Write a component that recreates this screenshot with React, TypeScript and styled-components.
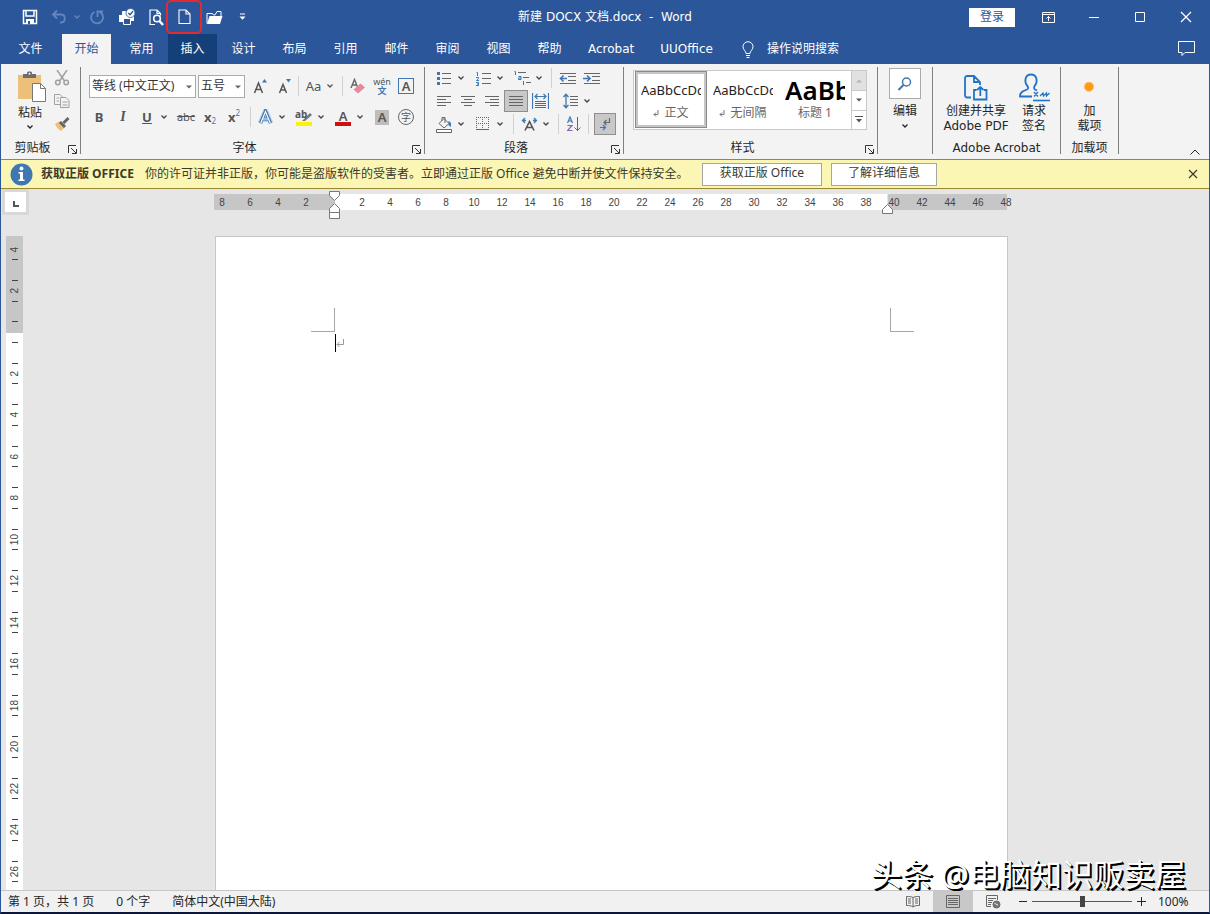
import React from "react";
import styled, { createGlobalStyle, css } from "styled-components";

const ui = `"Noto Sans", "Noto Sans CJK SC", sans-serif`;
const wide = `"DejaVu Sans", "Noto Sans CJK SC", sans-serif`;
const blue = "#2b579a";
const iconGrey = "#666666";
const iconBlue = "#3f78b0";

const Global = createGlobalStyle`
  * { box-sizing: border-box; }
  html, body, #root { height: 100%; }
  body { margin: 0; font-family: ${ui}; font-size: 12px; line-height: 16px; color: #262626; }
  button, select, input { font: inherit; color: inherit; margin: 0; }
  svg { display: block; flex: none; }
`;

const Window = styled.div`
  position: relative;
  display: flex;
  flex-direction: column;
  height: 100%;
  overflow: hidden;
  background: #e6e6e6;
  border: solid ${blue};
  border-width: 0 1px 2px;
  border-bottom-color: #0b1638;
`;

const PlainButton = styled.button`
  border: 0;
  padding: 0;
  background: transparent;
  display: flex;
  align-items: center;
  justify-content: center;
  flex: none;
  white-space: nowrap;
`;

/* ---------- title bar ---------- */

const TitleBar = styled.header`
  display: grid;
  grid-template-columns: 1fr auto 1fr;
  align-items: center;
  height: 34px;
  flex: none;
  background: ${blue};
  color: #fff;
`;
const QuickAccess = styled.div`
  display: flex;
  align-items: center;
  padding-left: 14px;
  height: 34px;
`;
const QuickButton = styled(PlainButton)<{ $w: number; $dim?: boolean }>`
  width: ${(p) => p.$w}px;
  height: 32px;
  color: ${(p) => (p.$dim ? "#6486bd" : "#fff")};
`;
const MarkedButton = styled(PlainButton)`
  width: 36px;
  height: 34px;
  margin: 0 -5px;
  border: 2px solid #e32a2e;
  border-radius: 5px;
  color: #fff;
`;
const Title = styled.h1`
  margin: 0;
  font-family: ${wide};
  font-size: 12px;
  font-weight: 400;
  white-space: pre;
`;
const WindowControls = styled.div`
  display: flex;
  align-items: center;
  justify-content: flex-end;
`;
const SignIn = styled(PlainButton)`
  width: 46px;
  height: 19px;
  margin-right: 10px;
  background: #fff;
  color: ${blue};
`;
const WindowButton = styled(PlainButton)`
  width: 46px;
  height: 32px;
`;

/* ---------- tab strip ---------- */

const TabStrip = styled.nav`
  display: flex;
  height: 30px;
  flex: none;
  background: ${blue};
  color: #fff;
  font-family: ${wide};
`;
const FileGroup = styled.div`
  display: flex;
  margin: 0 7px 0 5px;
`;
const TabGroup = styled.div`
  display: flex;
  gap: 2px;
  margin-left: 6px;
`;
const Tab = styled(PlainButton)<{ $active?: boolean; $hover?: boolean }>`
  min-width: 49px;
  padding: 0 12px;
  ${(p) => p.$active && css`background: #f3f3f3; color: ${blue};`}
  ${(p) => p.$hover && css`background: #143f78;`}
`;
const TellMe = styled(PlainButton)`
  gap: 13px;
  margin-left: 17px;
`;
const CommentButton = styled(PlainButton)`
  width: 46px;
  margin-left: auto;
  padding-bottom: 2px;
`;

/* ---------- ribbon ---------- */

const Ribbon = styled.section`
  display: flex;
  height: 95px;
  flex: none;
  background: #f3f3f3;
`;
const GroupBox = styled.div<{ $w: number }>`
  width: ${(p) => p.$w}px;
  height: 87px;
  margin-top: 3px;
  flex: none;
  display: flex;
  flex-direction: column;
  border-right: 1px solid #7f7f7f;
`;
const GroupBody = styled.div`
  flex: 1;
  min-height: 0;
`;
const GroupFoot = styled.div`
  display: flex;
  height: 14px;
  align-items: center;
`;
const GroupLabel = styled.span<{ $wide?: boolean }>`
  flex: 1;
  padding-top: 2px;
  text-align: center;
  white-space: nowrap;
  font-family: ${(p) => (p.$wide ? wide : ui)};
`;
const Launcher = styled(PlainButton)`
  width: 16px;
  height: 14px;
  padding-top: 4px;
`;
const ClipboardBody = styled.div`
  display: flex;
  padding-left: 8px;
`;
const PasteButton = styled(PlainButton)`
  width: 42px;
  height: 70px;
  flex-direction: column;
  justify-content: flex-start;
  padding-top: 4px;
  gap: 3px;
`;
const ToolColumn = styled.div`
  display: flex;
  flex-direction: column;
  gap: 1px;
`;
const FontRows = styled.div`
  display: flex;
  flex-direction: column;
  gap: 7px;
  padding: 7px 0 0 6px;
`;
const ParagraphRows = styled.div`
  display: flex;
  flex-direction: column;
  gap: 1px;
  padding-left: 7px;
`;
const ToolRow = styled.div<{ $h: number }>`
  display: flex;
  align-items: center;
  height: ${(p) => p.$h}px;
`;
const Tool = styled(PlainButton)<{ $on?: boolean; $w?: number }>`
  width: ${(p) => p.$w ?? 24}px;
  height: 22px;
  gap: 5px;
  color: #555;
  ${(p) => p.$on && css`background: #c8c8c8; outline: 1px solid #8e8e8e; outline-offset: -1px;`}
`;
const DropTool = styled(PlainButton)`
  width: 15px;
  height: 22px;
  justify-content: flex-start;
  padding-left: 1px;
  color: #444;
`;
const Separator = styled.span<{ $before?: number; $after?: number }>`
  width: 1px;
  height: 20px;
  flex: none;
  background: #d0d0d0;
  margin: 0 ${(p) => p.$after ?? 3}px 0 ${(p) => p.$before ?? 2}px;
`;
const Gap = styled.span<{ $w?: number }>`
  width: ${(p) => p.$w ?? 6}px;
  flex: none;
`;
const ComboWrap = styled.span<{ $w: number }>`
  position: relative;
  width: ${(p) => p.$w}px;
  height: 23px;
  margin: 0 0 0 2px;
  flex: none;
  color: #666;
  svg {
    position: absolute;
    right: 4px;
    top: 10px;
    pointer-events: none;
  }
`;
const Combo = styled.select`
  appearance: none;
  width: 100%;
  height: 23px;
  padding: 0 0 0 2px;
  border: 1px solid #ababab;
  border-radius: 0;
  background: #fff;
  color: #333;
`;
const Glyph = styled.span<{ $size?: number; $bold?: boolean; $italic?: boolean; $line?: string; $serif?: boolean }>`
  font-family: ${(p) => (p.$serif ? `"Liberation Serif", serif` : ui)};
  font-size: ${(p) => p.$size ?? 12}px;
  font-weight: ${(p) => (p.$bold ? 700 : 400)};
  font-style: ${(p) => (p.$italic ? "italic" : "normal")};
  text-decoration: ${(p) => p.$line ?? "none"};
  line-height: 16px;
`;
const Script = styled.small<{ $up?: boolean }>`
  font-size: 8px;
  font-weight: 400;
  line-height: 8px;
  color: ${iconBlue};
  align-self: ${(p) => (p.$up ? "flex-start" : "flex-end")};
`;
const ScriptTool = styled(Tool)`
  gap: 0;
  padding: 3px 0;
`;
const Pinyin = styled.span`
  display: flex;
  flex-direction: column;
  align-items: center;
  font-size: 9px;
  line-height: 9px;
  b {
    font-size: 9px;
    line-height: 10px;
    color: ${iconBlue};
  }
`;
const FramedA = styled.span`
  width: 16px;
  height: 16px;
  border: 1px solid ${iconBlue};
  font-size: 13px;
  font-weight: 600;
  line-height: 14px;
  text-align: center;
`;
const ShadedA = styled.span`
  width: 14px;
  height: 15px;
  background: #bdbdbd;
  font-size: 13px;
  font-weight: 600;
  line-height: 15px;
  text-align: center;
`;
const CircledChar = styled.span`
  width: 16px;
  height: 16px;
  border: 1px solid #666;
  border-radius: 50%;
  font-size: 10px;
  line-height: 14px;
  text-align: center;
`;
const ColourBarA = styled.span`
  width: 16px;
  height: 17px;
  border-bottom: 4px solid #d01010;
  font-size: 13px;
  font-weight: 600;
  line-height: 14px;
  text-align: center;
`;

const Gallery = styled.div`
  display: flex;
  height: 60px;
  margin: 3px 0 0 9px;
  width: 234px;
  border: 1px solid #c9c9c9;
  background: #fff;
`;
const StyleCard = styled(PlainButton)<{ $on?: boolean }>`
  flex-direction: column;
  justify-content: flex-start;
  gap: 1px;
  width: 72px;
  height: 57px;
  padding: 2px 3px 0;
  border: 3px solid ${(p) => (p.$on ? "#c6c6c6" : "transparent")};
  outline: ${(p) => (p.$on ? "1px solid #8a8a8a" : "none")};
  outline-offset: -1px;
  margin-left: ${(p) => (p.$on ? 1 : 0)}px;
`;
const Sample = styled.span<{ $head?: boolean }>`
  width: 60px;
  height: 28px;
  overflow: hidden;
  text-align: left;
  color: ${(p) => (p.$head ? "#000" : "#222")};
  font-size: ${(p) => (p.$head ? 26 : 13)}px;
  font-weight: ${(p) => (p.$head ? 600 : 400)};
  line-height: 28px;
`;
const StyleName = styled.span`
  display: flex;
  align-items: center;
  gap: 5px;
  color: #666;
`;
const GalleryScroll = styled.div`
  display: grid;
  grid-template-rows: repeat(3, 1fr);
  width: 15px;
  margin-left: auto;
  border-left: 1px solid #c9c9c9;
`;
const ScrollButton = styled(PlainButton)<{ $off?: boolean }>`
  background: ${(p) => (p.$off ? "#e1e1e1" : "#fff")};
  color: ${(p) => (p.$off ? "#b5b5b5" : "#555")};
  & + & { border-top: 1px solid #c9c9c9; }
`;
const BigButton = styled(PlainButton)`
  flex-direction: column;
  justify-content: flex-start;
`;
const EditButton = styled(BigButton)`
  width: 100%;
  padding-top: 1px;
  gap: 4px;
`;
const EditFrame = styled.span`
  width: 32px;
  height: 31px;
  display: grid;
  place-items: center;
  background: #fff;
  border: 1px solid #ababab;
`;
const LargeRow = styled.div`
  display: flex;
  justify-content: center;
  gap: 10px;
  padding-top: 4px;
`;
const TwoLines = styled.span`
  display: flex;
  flex-direction: column;
  align-items: center;
  font-family: ${wide};
  line-height: 15px;
`;
const LargeIcon = styled.span`
  height: 33px;
  display: grid;
  place-items: center;
`;
const Collapse = styled(PlainButton)`
  width: 28px;
  height: 14px;
  margin: auto 0 0 auto;
`;

/* ---------- licence message ---------- */

const MessageBar = styled.section`
  display: flex;
  align-items: center;
  height: 30px;
  flex: none;
  padding-left: 9px;
  background: #fcf6b4;
  border: solid #9b8832;
  border-width: 1px 0;
  color: #3a3a2c;
  white-space: nowrap;
`;
const MessageTitle = styled.strong`
  margin: 0 11px 0 8px;
`;
const MessageText = styled.span`
  width: 557px;
`;
const MessageButton = styled(PlainButton)<{ $w: number }>`
  width: ${(p) => p.$w}px;
  height: 23px;
  margin-right: 9px;
  padding-bottom: 2px;
  border: 1px solid #a5a5a5;
  background: #fff;
`;
const MessageClose = styled(PlainButton)`
  width: 32px;
  height: 24px;
  margin-left: auto;
`;

/* ---------- document area ---------- */

const Workspace = styled.main`
  flex: 1;
  min-height: 0;
  display: grid;
  grid-template-columns: 28px 1fr;
  grid-template-rows: 47px 1fr;
`;
const TabSelector = styled(PlainButton)`
  width: 27px;
  height: 26px;
  margin-left: 1px;
  border: 3px solid #d8d8d8;
  background: #fff;
  padding: 4px 0 0;
`;
const RulerTrack = styled.div`
  display: flex;
  justify-content: center;
  padding: 5px 12px 0 0;
  margin-left: -5px;
`;
const HRuler = styled.div`
  position: relative;
  display: flex;
  width: 793px;
  height: 16px;
  font-family: "Liberation Sans", sans-serif;
  font-size: 10px;
  color: #444;
`;
const HPart = styled.div<{ $kind: "left" | "text" | "right" }>`
  display: flex;
  flex: none;
  ${(p) => p.$kind === "left" && css`width: 121px; padding-right: 15px; justify-content: flex-end; background: #c6c6c6; overflow: hidden;`}
  ${(p) => p.$kind === "text" && css`width: 552px; padding-left: 13px; background: #fff;`}
  ${(p) => p.$kind === "right" && css`width: 119px; margin-left: 1px; background: #c6c6c6;`}
`;
const HNumber = styled.span`
  width: 28px;
  flex: none;
  text-align: center;
  line-height: 17px;
  ${HPart}:last-of-type > &:first-child { margin-left: -8px; }
`;
const IndentMarker = styled.span<{ $right?: boolean }>`
  position: absolute;
  ${(p) => (p.$right ? "right: 113px; top: 9px;" : "left: 114px; top: -3px;")}
`;
const VRuler = styled.div`
  display: flex;
  flex-direction: column;
  width: 17px;
  margin-left: 5px;
  min-height: 0;
  overflow: hidden;
  background: #fff;
  font-family: "Liberation Sans", sans-serif;
  font-size: 10px;
  color: #444;
`;
const VMargin = styled.div`
  display: flex;
  flex-direction: column;
  justify-content: flex-end;
  flex: none;
  height: 97px;
  padding-bottom: 1px;
  background: #c6c6c6;
  overflow: hidden;
`;
const VCell = styled.div<{ $short?: boolean }>`
  display: flex;
  flex-direction: column;
  align-items: center;
  justify-content: space-between;
  flex: none;
  height: 42px;
  padding: 10px 0;
  &:nth-child(odd) { height: 41px; }
  ${(p) => p.$short && css`&& { height: 20px; padding: 9px 0; }`}
`;
const Tick = styled.i<{ $hidden?: boolean }>`
  width: 6px;
  height: 1px;
  background: ${(p) => (p.$hidden ? "transparent" : "#444")};
`;
const VNumber = styled.span`
  writing-mode: vertical-rl;
  transform: rotate(180deg);
  line-height: 12px;
`;
const PageTrack = styled.div`
  display: flex;
  justify-content: center;
  padding-right: 10px;
  margin-left: -5px;
  min-height: 0;
`;
const Page = styled.article`
  width: 793px;
  padding: 71px 93px 0 95px;
  background: #fff;
  border: 1px solid #c6c6c6;
  border-bottom: 0;
`;
const Corners = styled.div`
  display: flex;
  justify-content: space-between;
`;
const Corner = styled.i<{ $right?: boolean }>`
  width: 24px;
  height: 24px;
  border: solid #a6a6a6;
  border-width: ${(p) => (p.$right ? "0 0 1px 1px" : "0 1px 1px 0")};
`;
const TextLine = styled.p`
  display: flex;
  align-items: center;
  margin: 2px 0 0 24px;
`;
const Caret = styled.i`
  width: 1px;
  height: 18px;
  background: #000;
`;
const Watermark = styled.div`
  position: absolute;
  right: 23px;
  bottom: 20px;
  font-size: 31px;
  line-height: 36px;
  color: #fff;
  text-shadow: 1px 1px 0 #000, 2px 2px 0 #000;
  white-space: nowrap;
`;

/* ---------- status bar ---------- */

const StatusBar = styled.footer`
  display: flex;
  align-items: center;
  height: 22px;
  flex: none;
  padding-left: 7px;
  background: #f1f1f1;
  border-top: 1px solid #c6c6c6;
`;
const StatusText = styled.span`
  margin-right: 22px;
  white-space: nowrap;
`;
const ViewTools = styled.div`
  display: flex;
  align-items: center;
  margin-left: auto;
`;
const ViewButton = styled(PlainButton)<{ $on?: boolean }>`
  width: 40px;
  height: 21px;
  color: #666;
  background: ${(p) => (p.$on ? "#c8c8c8" : "transparent")};
`;
const ZoomStep = styled(PlainButton)`
  width: 19px;
  height: 21px;
`;
const Zoom = styled.input`
  appearance: none;
  width: 100px;
  height: 16px;
  background: linear-gradient(#555, #555) center / 100% 1px no-repeat;
  &::-webkit-slider-thumb {
    appearance: none;
    width: 5px;
    height: 11px;
    background: #444;
  }
`;
const ZoomValue = styled.span`
  width: 58px;
  padding-left: 7px;
`;

/* ---------- icons ---------- */

type Box = { w: number; h?: number; children: React.ReactNode; sw?: number; c?: string };
const Ic = ({ w, h, children, sw = 1, c = "currentColor" }: Box) => (
  <svg width={w} height={h ?? w} viewBox={`0 0 ${w} ${h ?? w}`} fill="none" stroke={c} strokeWidth={sw} aria-hidden="true">
    {children}
  </svg>
);
const Chevron = () => (
  <Ic w={8} h={6} sw={1.3}><path d="M1.500 1.500 4 4l2.500-2.500" /></Ic>
);
const Triangle = ({ up }: { up?: boolean }) => (
  <Ic w={6} h={4}><path d={up ? "M0 3.500h6L3 .5z" : "M0 .5h6L3 3.500z"} fill="currentColor" stroke="none" /></Ic>
);
const Lines = ({ rows }: { rows: [number, number][] }) => (
  <Ic w={16} h={13} c={iconGrey}>
    {rows.map(([a, b], i) => <path key={i} d={`M${a} ${i * 3 + 1.5}H${b}`} />)}
  </Ic>
);
const DialogArrow = () => (
  <Ic w={9} h={9} c="#333"><path d="M.5 8V.5H8M3 3l5 5M8.500 4v4.500H4" /></Ic>
);
const Cross = ({ s }: { s: number }) => (
  <Ic w={s} sw={1.2}><path d={`M1 1 ${s - 1} ${s - 1}M${s - 1} 1 1 ${s - 1}`} /></Ic>
);
const Return = () => (
  <Ic w={6} h={7} c="#777"><path d="M5 0v4.500H1M3 2.500 1 4.500l2 2" /></Ic>
);

function Group({ w, label, launcher, latin, children }: { w: number; label?: string; launcher?: boolean; latin?: boolean; children: React.ReactNode }) {
  return (
    <GroupBox $w={w}>
      <GroupBody>{children}</GroupBody>
      <GroupFoot>
        <GroupLabel $wide={latin}>{label}</GroupLabel>
        {launcher && <Launcher aria-label={`${label}设置`}><DialogArrow /></Launcher>}
      </GroupFoot>
    </GroupBox>
  );
}
const Drop = ({ name }: { name: string }) => (
  <DropTool aria-label={`${name}选项`}><Chevron /></DropTool>
);

const tabs = ["常用", "插入", "设计", "布局", "引用", "邮件", "审阅", "视图", "帮助", "Acrobat", "UUOffice"];
const evens = (from: number, to: number) => Array.from({ length: (to - from) / 2 + 1 }, (_, i) => from + i * 2);

function Header() {
  return (
    <>
      <TitleBar>
        <QuickAccess>
          <QuickButton $w={30} aria-label="保存">
            <Ic w={16} sw={1.5}><path d="M1.500 1.500h13v13h-13z" /><path d="M4 2v5h8V2" /><path d="M4 10h8v5H4z" fill="#fff" stroke="none" /><path d="M6 12h2v3H6z" fill={blue} stroke="none" /></Ic>
          </QuickButton>
          <QuickButton $w={27} $dim aria-label="撤消">
            <Ic w={16} sw={1.8}><path d="M6 1.500 2 5.500l4 4M2.500 5.500h7.500c5 0 5 8 0 8H9" /></Ic>
          </QuickButton>
          <QuickButton $w={9} $dim aria-label="撤消列表"><Chevron /></QuickButton>
          <QuickButton $w={32} $dim aria-label="重复">
            <Ic w={16} sw={1.8}><path d="M5.500 3A6 6 0 1 0 11 3.200M8.500 8V2.500H14" /></Ic>
          </QuickButton>
          <QuickButton $w={28} aria-label="快速打印">
            <Ic w={18} h={18}>
              <path d="M1 7h4v-3h3v3h8v6h-3v-2H5v3H1z" fill="#fff" stroke="none" />
              <path d="M5.500 11v5.500h7V11M4.500 7V3.500H8" />
              <circle cx="12.500" cy="5" r="4.500" fill="#fff" stroke={blue} strokeWidth=".8" />
              <path d="m10.300 5 1.700 1.800 3-3.600" stroke={blue} strokeWidth="1.400" />
            </Ic>
          </QuickButton>
          <QuickButton $w={30} aria-label="打印预览">
            <Ic w={16} h={17} sw={1.2}><path d="M7 15.500H2V1h7l3.500 3.500v2M9 1v3.500h3.500" /><circle cx="9" cy="9.500" r="3.300" strokeWidth="1.600" /><path d="m11.500 12 3.500 4" strokeWidth="2.400" /></Ic>
          </QuickButton>
          <MarkedButton aria-label="新建">
            <Ic w={13} h={16} sw={1.1}><path d="M1 1h7l4 4v9.500H1zM8 1v4h4" /></Ic>
          </MarkedButton>
          <QuickButton $w={34} aria-label="打开">
            <Ic w={17} h={15}><path d="M1 13.500V3.500h5L8 5h1l2-3.500h4V6" /><path d="M3.500 6H16.500L14 14H1z" fill="#fff" stroke="none" /></Ic>
          </QuickButton>
          <QuickButton $w={22} aria-label="自定义快速访问工具栏">
            <Ic w={7} h={8}><path d="M1 1h5" /><path d="M.5 3.500h6L3.500 6.800z" fill="currentColor" stroke="none" /></Ic>
          </QuickButton>
        </QuickAccess>
        <Title>新建 DOCX 文档.docx  -  Word</Title>
        <WindowControls>
          <SignIn>登录</SignIn>
          <WindowButton aria-label="功能区显示选项"><Ic w={13} h={11}><path d="M.5.5h12v10H.5zM.5 2.500h12M6.500 9V4.500M4.500 6.500l2-2 2 2" /></Ic></WindowButton>
          <WindowButton aria-label="最小化"><Ic w={10} h={3}><path d="M0 1.500h10" /></Ic></WindowButton>
          <WindowButton aria-label="最大化"><Ic w={10}><path d="M.5.5h9v9h-9z" /></Ic></WindowButton>
          <WindowButton aria-label="关闭"><Cross s={12} /></WindowButton>
        </WindowControls>
      </TitleBar>
      <TabStrip>
        <FileGroup><Tab>文件</Tab></FileGroup>
        <Tab $active>开始</Tab>
        <TabGroup>
          {tabs.map((t) => <Tab key={t} $hover={t === "插入"}>{t}</Tab>)}
        </TabGroup>
        <TellMe>
          <Ic w={12} h={17}><path d="M4 12.500c0-2.500-3-3.500-3-6.800a5 5 0 0 1 10 0c0 3.300-3 4.300-3 6.800zM4 14.500h4M4.500 16.500h3" /></Ic>
          操作说明搜索
        </TellMe>
        <CommentButton aria-label="批注"><Ic w={17} h={15}><path d="M.5.5h16v11H7L4 14.500v-3H.5z" /></Ic></CommentButton>
      </TabStrip>
    </>
  );
}

function FontGroup() {
  return (
    <Group w={344} label="字体" launcher>
      <FontRows>
        <ToolRow $h={24}>
          <ComboWrap $w={107}>
            <Combo aria-label="字体"><option>等线 (中文正文)</option></Combo>
            <Triangle />
          </ComboWrap>
          <ComboWrap $w={47}>
            <Combo aria-label="字号"><option>五号</option></Combo>
            <Triangle />
          </ComboWrap>
          <Gap $w={3} />
          <Tool aria-label="增大字号"><Ic w={15} h={16} sw={1.5} c="#555"><path d="m1.500 15 4-10 4 10M3 11.500h5" /><path d="M9 4.500h5L11.500 1z" fill={iconBlue} stroke="none" /></Ic></Tool>
          <Tool aria-label="减小字号"><Ic w={15} h={16} sw={1.5} c="#555"><path d="m2.500 15 3.500-8.500L9.500 15M4 12h4" /><path d="M9 1h5l-2.500 3.500z" fill={iconBlue} stroke="none" /></Ic></Tool>
          <Separator />
          <Tool $w={36} aria-label="更改大小写"><Glyph $size={13}>Aa</Glyph><Chevron /></Tool>
          <Separator $before={4} />
          <Tool aria-label="清除格式"><Ic w={16} h={16} sw={1.4} c="#666"><path d="m1 10 3.500-8.500L7.500 9M2.500 7h4" /><path d="m3.500 11.500 7-6 4.500 4-7 6z" fill="#e8899a" stroke="none" /></Ic></Tool>
          <Tool aria-label="拼音指南"><Pinyin>wén<b>文</b></Pinyin></Tool>
          <Tool aria-label="字符边框"><FramedA>A</FramedA></Tool>
        </ToolRow>
        <ToolRow $h={24}>
          <Tool aria-label="加粗"><Glyph $bold $size={13}>B</Glyph></Tool>
          <Tool aria-label="倾斜"><Glyph $italic $serif $bold $size={14}>I</Glyph></Tool>
          <Tool aria-label="下划线"><Glyph $bold $line="underline" $size={13}>U</Glyph></Tool>
          <Drop name="下划线" />
          <Tool aria-label="删除线"><Glyph $size={11} $line="line-through">abc</Glyph></Tool>
          <ScriptTool aria-label="下标"><Glyph $bold $size={13}>x</Glyph><Script>2</Script></ScriptTool>
          <ScriptTool aria-label="上标"><Glyph $bold $size={13}>x</Glyph><Script $up>2</Script></ScriptTool>
          <Separator $before={4} $after={2} />
          <Tool aria-label="文本效果"><Ic w={15} h={16}><path d="M2 14.500 7.500 2 13 14.500M4.500 10.500h6" stroke="#b5d3ee" strokeWidth="5" /><path d="M2.500 14 7.500 2l5 12M4.500 10h6" stroke={iconBlue} strokeWidth="3.200" /><path d="M2.800 14 7.500 2.500 12.200 14M4.500 10h6" stroke="#fff" strokeWidth="1.200" /></Ic></Tool>
          <Drop name="文本效果" />
          <Tool aria-label="突出显示">
            <Ic w={18} h={17}><path d="M1 13h16v4H1z" fill="#fff200" stroke="none" /><path d="m8 11 7-7 2 2-7 6H7z" fill="#777" stroke="none" /><text x="0" y="9" fontFamily="Noto Sans" fontSize="10" fontWeight="700" fill="#555" stroke="none">ab</text></Ic>
          </Tool>
          <Drop name="突出显示" />
          <Tool aria-label="字体颜色"><ColourBarA>A</ColourBarA></Tool>
          <Drop name="字体颜色" />
          <Tool aria-label="字符底纹"><ShadedA>A</ShadedA></Tool>
          <Tool aria-label="带圈字符"><CircledChar>字</CircledChar></Tool>
        </ToolRow>
      </FontRows>
    </Group>
  );
}

function ParagraphGroup() {
  return (
    <Group w={199} label="段落" launcher>
      <ParagraphRows>
        <ToolRow $h={22}>
          <Tool aria-label="项目符号"><Ic w={15} h={15} c={iconGrey}><path d="M5 2.500h9M5 7.500h9M5 12.500h9" /><path d="M0 1h3v3H0zM0 6h3v3H0zM0 11h3v3H0z" fill={iconBlue} stroke="none" /></Ic></Tool>
          <Drop name="项目符号" />
          <Tool aria-label="编号"><Ic w={15} h={15} c={iconGrey}><path d="M6 2.500h9M6 7.500h9M6 12.500h9" /><path d="M.5 1.500h1V5M0 6.500h2.500v1.200L.5 9.500H3M0 11.500h2.500v3H0M1 13h1.500" stroke={iconBlue} /></Ic></Tool>
          <Drop name="编号" />
          <Tool aria-label="多级列表"><Ic w={17} h={16} c={iconGrey}><path d="M4 2.500h8M9 7.500h6M12 12.500h5" /><path d="M.5 1.500h1V5M4.500 6.500h2.500v3H4.500V8H7M9.500 11v4" stroke={iconBlue} /></Ic></Tool>
          <Drop name="多级列表" />
          <Separator />
          <Tool aria-label="减少缩进量"><Ic w={17} h={13} c={iconGrey}><path d="M1 1.500h16M9 4.500h8M9 8.500h8M1 11.500h16" /><path d="M8 6.500H1.500M4.500 3.500l-3 3 3 3" stroke={iconBlue} strokeWidth="1.600" /></Ic></Tool>
          <Tool aria-label="增加缩进量"><Ic w={17} h={13} c={iconGrey}><path d="M1 1.500h16M9 4.500h8M9 8.500h8M1 11.500h16" /><path d="M0 6.500h7M4 3.500l3 3-3 3" stroke={iconBlue} strokeWidth="1.600" /></Ic></Tool>
        </ToolRow>
        <ToolRow $h={22}>
          <Tool aria-label="左对齐"><Lines rows={[[1, 15], [1, 10], [1, 15], [1, 10]]} /></Tool>
          <Tool aria-label="居中"><Lines rows={[[1, 15], [4, 12], [1, 15], [4, 12]]} /></Tool>
          <Tool aria-label="右对齐"><Lines rows={[[1, 15], [6, 15], [1, 15], [6, 15]]} /></Tool>
          <Tool $on aria-label="两端对齐"><Lines rows={[[1, 15], [1, 15], [1, 15], [1, 15]]} /></Tool>
          <Tool aria-label="分散对齐"><Ic w={17} h={16} c={iconGrey}><path d="M3 8.500h11M3 10.500h11M3 12.500h11M3 14.500h11" /><path d="M.5 0v16M16.500 0v16M3 3.500h11M5.500 1 3 3.500 5.500 6M11.500 1 14 3.500 11.500 6" stroke={iconBlue} strokeWidth="1.200" /></Ic></Tool>
          <Gap />
          <Tool aria-label="行距"><Ic w={15} h={16} c={iconGrey}><path d="M7 3.500h8M7 6.500h8M7 9.500h8M7 12.500h8" /><path d="M3 1v14M.5 4 3 1.200 5.500 4M.5 12 3 14.800 5.500 12" stroke={iconBlue} strokeWidth="1.300" /></Ic></Tool>
          <Drop name="行距" />
        </ToolRow>
        <ToolRow $h={22}>
          <Tool aria-label="底纹"><Ic w={17} h={17} c={iconGrey}><path d="m3 7.500 5-5 5 5-5 4.500zM6 5V1.500h3V7" /><path d="M12.500 5c3 1 3 4 2 6l-2-2z" fill={iconBlue} stroke="none" /><path d="M.5 13.500h15v3H.5z" fill="#fff" /></Ic></Tool>
          <Drop name="底纹" />
          <Tool aria-label="边框"><Ic w={14} h={14} c={iconGrey}><path d="M0 .5h13M0 6.500h13M.5 0v12M6.500 0v12M12.500 0v12" strokeDasharray="1 1" /><path d="M0 12.500h13" /></Ic></Tool>
          <Drop name="边框" />
          <Separator $before={3} />
          <Tool aria-label="中文版式"><Ic w={17} h={14} c="#555" sw={1.6}><path d="m4 13.500 4.500-9 4.500 9M6 10.500h5" /><path d="M4 1 1.500 3.500 4 6M13 1l2.500 2.500L13 6M1.500 3.500H5M12 3.500h3.500" stroke={iconBlue} strokeWidth="1.300" /></Ic></Tool>
          <Drop name="中文版式" />
          <Separator />
          <Tool aria-label="排序"><Ic w={14} h={16}><path d="m.5 7 2.500-6 2.500 6M1.500 5h3" stroke={iconBlue} strokeWidth="1.200" /><path d="M.5 9.500H5L.5 14.500H5.500" stroke="#8a5fae" strokeWidth="1.200" /><path d="M10.500 1v13.500M7.500 11.500l3 3 3-3" stroke="#666" /></Ic></Tool>
          <Separator $after={5} />
          <Tool $w={22} $on aria-label="显示编辑标记"><Ic w={12} h={13}><path d="M10.500 0v4.500H5M7.500 2 5 4.500 7.500 7" stroke="#666" strokeWidth="1.200" /><path d="M1 9.500h5M4 7l2.500 2.500L4 12" stroke={iconBlue} strokeWidth="1.200" /></Ic></Tool>
        </ToolRow>
      </ParagraphRows>
    </Group>
  );
}

function RibbonBar() {
  return (
    <Ribbon>
      <Group w={80} label="剪贴板" launcher>
        <ClipboardBody>
          <PasteButton>
            <Ic w={32} h={31}>
              <g transform="translate(4 0)">
                <path d="M0 4h23v24H0z" fill="#ecc078" stroke="none" />
                <path d="M5 3h4V1.500C9 0 14 0 14 1.500V3h4v4H5z" fill="#6d6d6d" stroke="none" />
                <circle cx="11.500" cy="2.800" r="1" fill="#f3f3f3" stroke="none" />
                <path d="M14.500 12.500h8l5 5v13h-13z" fill="#fff" stroke="#777" /><path d="M22.500 12.500v5h5" stroke="#777" />
              </g>
            </Ic>
            粘贴
            <Chevron />
          </PasteButton>
          <ToolColumn>
            <Tool $w={22} aria-label="剪切"><Ic w={16} c="#a0a0a0" sw={1.5}><path d="m3 0 7.500 11M13 0 5.500 11" /><circle cx="3.800" cy="12.500" r="2.200" /><circle cx="12.200" cy="12.500" r="2.200" /></Ic></Tool>
            <Tool $w={22} aria-label="复制"><Ic w={16} h={14} c="#a0a0a0"><path d="M6 10.500H.5V.5H6L8.500 3" /><path d="M6.500 3.500H12l3 3v7H6.500zM2.500 4h2.500M2.500 7h2.500M8.500 8h5M8.500 11h5" /></Ic></Tool>
            <Tool $w={22} aria-label="格式刷"><Ic w={16} h={16}><path d="m1 8 5-3 5 6-4 4C4 13 2 11 1 8z" fill="#ecc078" stroke="none" /><path d="m6 6 5 5" stroke="#666" strokeWidth="3" /><path d="m9.500 7 5-5" stroke="#666" strokeWidth="3" /></Ic></Tool>
          </ToolColumn>
        </ClipboardBody>
      </Group>
      <FontGroup />
      <ParagraphGroup />
      <Group w={254} label="样式" launcher>
        <Gallery>
          <StyleCard $on><Sample>AaBbCcDd</Sample><StyleName><Return />正文</StyleName></StyleCard>
          <StyleCard><Sample>AaBbCcDd</Sample><StyleName><Return />无间隔</StyleName></StyleCard>
          <StyleCard><Sample $head>AaBb</Sample><StyleName>标题 1</StyleName></StyleCard>
          <GalleryScroll>
            <ScrollButton $off aria-label="上一行"><Triangle up /></ScrollButton>
            <ScrollButton aria-label="下一行"><Triangle /></ScrollButton>
            <ScrollButton aria-label="其他样式"><Ic w={8} h={7}><path d="M0 .5h8" /><path d="M1 3h6L4 6.500z" fill="currentColor" stroke="none" /></Ic></ScrollButton>
          </GalleryScroll>
        </Gallery>
      </Group>
      <Group w={55}>
        <EditButton>
          <EditFrame><Ic w={14} h={14} c={iconBlue} sw={1.5}><circle cx="8.500" cy="5" r="4" /><path d="m5.500 8-5 5" strokeWidth="2" /></Ic></EditFrame>
          编辑
          <Chevron />
        </EditButton>
      </Group>
      <Group w={128} label="Adobe Acrobat" latin>
        <LargeRow>
          <BigButton>
            <LargeIcon><Ic w={24} h={26} c="#2374c6" sw={1.8}><path d="M7 22.500H3c-1 0-2-1-2-2V3c0-1 1-2 2-2h7l6 6v3M10 1v6h6M12.500 15H10v9.500h12.500V15H20M16.300 21v-8.500M13 15l3.300-3 3.200 3" /></Ic></LargeIcon>
            <TwoLines><span>创建并共享</span><span>Adobe PDF</span></TwoLines>
          </BigButton>
          <BigButton>
            <LargeIcon><Ic w={31} h={29} c="#2374c6" sw={1.8}><path d="M13 23.500H1c0-4 2-5 7-7 2-1 1-3 0-4-3-4-2-11 4-11s7 7 4 11c-1 1-1.500 3 0 4l2 1" /><path d="M14 27.500h17" strokeWidth="1.600" /><path d="m15 19 4 4.500M19 19l-4 4.500M21 23l3-3 .5 3 3-3v3l3-3" strokeWidth="1.300" /></Ic></LargeIcon>
            <TwoLines><span>请求</span><span>签名</span></TwoLines>
          </BigButton>
        </LargeRow>
      </Group>
      <Group w={58} label="加载项">
        <LargeRow>
          <BigButton>
            <LargeIcon><Ic w={12}><circle cx="6" cy="4.800" r="4.700" fill="#ff9a17" stroke="#ffc070" strokeWidth=".8" /></Ic></LargeIcon>
            <TwoLines><span>加</span><span>载项</span></TwoLines>
          </BigButton>
        </LargeRow>
      </Group>
      <Collapse aria-label="折叠功能区"><Ic w={10} h={6}><path d="m.5 5.500 4.500-4.500 4.500 4.500" /></Ic></Collapse>
    </Ribbon>
  );
}

export default function App() {
  return (
    <Window>
      <Global />
      <Header />
      <RibbonBar />
      <MessageBar>
        <svg width="23" height="23" viewBox="0 0 23 23" aria-hidden="true">
          <circle cx="11.500" cy="11.500" r="11" fill="#3f78b0" />
          <circle cx="11.500" cy="5.500" r="2" fill="#fff" />
          <path d="M8.500 9h4.500v7.500h1.500V18h-6v-1.500H10v-6H8.500z" fill="#fff" />
        </svg>
        <MessageTitle>获取正版 OFFICE</MessageTitle>
        <MessageText>你的许可证并非正版，你可能是盗版软件的受害者。立即通过正版 Office 避免中断并使文件保持安全。</MessageText>
        <MessageButton $w={120}>获取正版 Office</MessageButton>
        <MessageButton $w={106}>了解详细信息</MessageButton>
        <MessageClose aria-label="关闭此消息"><Cross s={10} /></MessageClose>
      </MessageBar>
      <Workspace>
        <TabSelector aria-label="制表符"><Ic w={6} h={6} c="#555" sw={2}><path d="M1 0v5h5" /></Ic></TabSelector>
        <RulerTrack>
          <HRuler>
            <HPart $kind="left">{evens(2, 8).reverse().map((n) => <HNumber key={n}>{n}</HNumber>)}</HPart>
            <HPart $kind="text">{evens(2, 38).map((n) => <HNumber key={n}>{n}</HNumber>)}</HPart>
            <HPart $kind="right">{evens(40, 48).map((n) => <HNumber key={n}>{n}</HNumber>)}</HPart>
            <IndentMarker><Ic w={13} h={28} c="#777"><path d="M1.500.5h10v4l-5 5-5-5zM1.500 21.500v-4l5-5 5 5v4zM1.500 21.500h10v6h-10z" fill="#fff" /></Ic></IndentMarker>
            <IndentMarker $right><Ic w={13} h={11} c="#777"><path d="M1.500 10.500v-4l5-5 5 5v4z" fill="#fff" /></Ic></IndentMarker>
          </HRuler>
        </RulerTrack>
        <VRuler>
          <VMargin>
            <VCell><Tick $hidden /><VNumber>4</VNumber><Tick /></VCell>
            <VCell><Tick /><VNumber>2</VNumber><Tick /></VCell>
            <VCell $short><Tick /></VCell>
          </VMargin>
          <VCell $short><Tick /></VCell>
          {evens(2, 26).map((n) => <VCell key={n}><Tick /><VNumber>{n}</VNumber><Tick /></VCell>)}
        </VRuler>
        <PageTrack>
          <Page>
            <Corners><Corner /><Corner $right /></Corners>
            <TextLine><Caret /><Ic w={8} h={9} c="#999"><path d="M7.500 0v5.500H1M3.500 3 1 5.500 3.500 8" /></Ic></TextLine>
          </Page>
        </PageTrack>
      </Workspace>
      <StatusBar>
        <StatusText>第 1 页，共 1 页</StatusText>
        <StatusText>0 个字</StatusText>
        <StatusText>简体中文(中国大陆)</StatusText>
        <ViewTools>
          <ViewButton aria-label="阅读视图"><Ic w={14} h={13}><path d="M7 2.500C5 1.500 3 1.500.5 1.500v9c2.500 0 4.500 0 6.500 1.500 2-1.500 4-1.500 6.500-1.500v-9c-2.500 0-4.500 0-6.500 1zM7 2.500V12M2 4h3M2 6h3M2 8h3M9 4h3M9 6h3M9 8h3" /></Ic></ViewButton>
          <ViewButton $on aria-label="页面视图"><Ic w={14} h={13}><path d="M.5.5h13v12H.5zM2 3.500h10M2 5.500h10M2 7.500h10M2 9.500h10" /></Ic></ViewButton>
          <ViewButton aria-label="Web 版式视图"><Ic w={15} h={14}><path d="M5 11.500H.5V.5h11V5M2 3.500h8M2 5.500h5M2 7.500h4M2 9.500h3" /><circle cx="10.500" cy="9.500" r="3.500" fill="#777" /><path d="M8.500 8.500c2 0 2 2 3.500 1" stroke="#f1f1f1" /></Ic></ViewButton>
          <ZoomStep aria-label="缩小"><Ic w={8} h={3}><path d="M0 1.500h8" /></Ic></ZoomStep>
          <Zoom type="range" aria-label="显示比例" min={0} max={100} defaultValue={50} />
          <ZoomStep aria-label="放大"><Ic w={9}><path d="M0 4.500h9M4.500 0v9" /></Ic></ZoomStep>
          <ZoomValue>100%</ZoomValue>
        </ViewTools>
      </StatusBar>
      <Watermark>头条 @电脑知识贩卖屋</Watermark>
    </Window>
  );
}
